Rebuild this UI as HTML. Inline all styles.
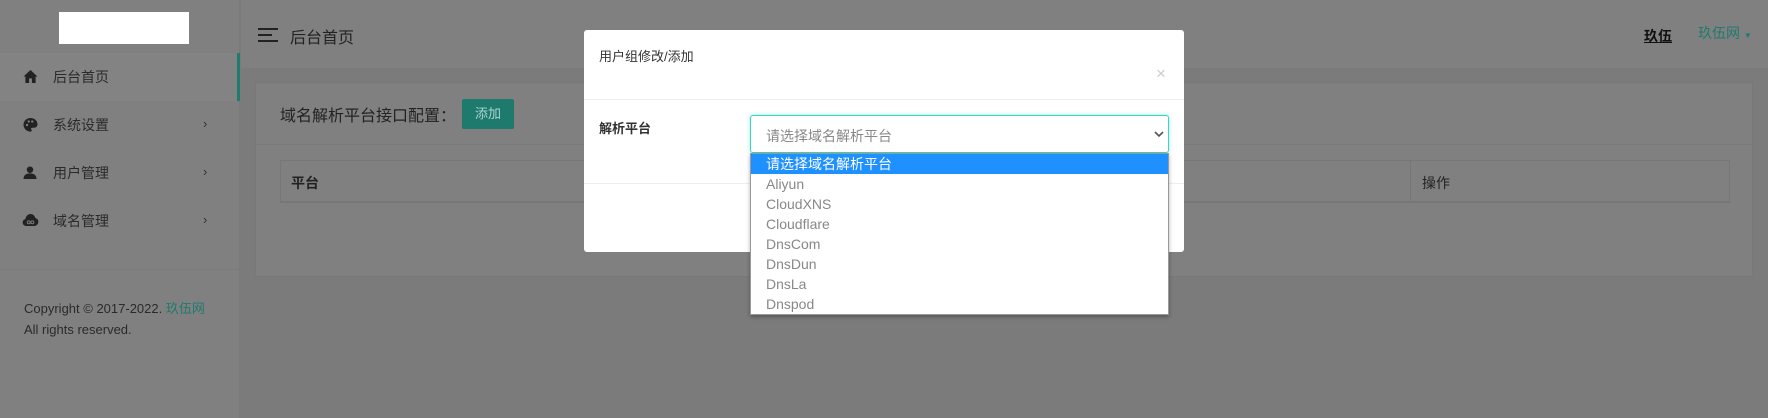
<!DOCTYPE html>
<html><head><meta charset="utf-8"><style>
*{margin:0;padding:0;box-sizing:border-box}
body{width:1768px;height:418px;overflow:hidden;background:#7b7b7b;font-family:"Liberation Sans","Noto Sans CJK SC",sans-serif;position:relative;color:#222}
.a{position:absolute}
.side{left:0;top:0;width:240px;height:418px;background:#808080;border-right:1px solid #7a7a7a}
.menu{left:0;width:240px;height:48px;font-size:14px;color:#2a2a2a}
.menu span{position:absolute;left:53px;top:14px}
.menu i{position:absolute;left:203px;top:15px;font-style:normal;font-size:13px;color:#333}
.menu svg{position:absolute;left:23px;top:17px}
.hdr{left:241px;top:0;width:1527px;height:68px;background:#808080}
.card{left:255px;top:82px;width:1498px;height:195px;background:#808080;border:1px solid #787878}
.opt{left:751px;width:417px;height:20px;font-size:14px;color:#888;padding-left:15px;line-height:20px}
</style></head><body>
<div class="a side">
 <div class="a" style="left:59px;top:12px;width:130px;height:32px;background:#fff"></div>
 <div class="a" style="left:0;top:53px;width:240px;height:1px;background:#7a7a7a"></div>
 <div class="a menu" style="top:53px;background:#838383"><svg width="15" height="13" viewBox="0 0 15 14"><path d="M7.5 0L0 7h2v7h4V9h3v5h4V7h2z" fill="#222"/></svg><span>后台首页</span></div>
 <div class="a" style="left:237px;top:53px;width:3px;height:48px;background:#1f7a6f"></div>
 <div class="a menu" style="top:101px"><svg width="15" height="14" viewBox="0 0 16 16"><path d="M8 0C3.6 0 0 3.4 0 7.6c0 4.3 3.6 8 8 8 1 0 1.4-.6 1.4-1.3 0-.9-.8-1.2-.8-2 0-.8.6-1.2 1.4-1.2H12c2.2 0 4-1.4 4-3.8C16 3 12.4 0 8 0z" fill="#222"/><circle cx="4" cy="8" r="1.3" fill="#808080"/><circle cx="6" cy="4" r="1.3" fill="#808080"/><circle cx="10" cy="4" r="1.3" fill="#808080"/></svg><span>系统设置</span><i>›</i></div>
 <div class="a menu" style="top:149px"><svg width="14" height="13" viewBox="0 0 14 14"><circle cx="7" cy="4" r="3.5" fill="#222"/><path d="M0 14c0-4 3-6 7-6s7 2 7 6z" fill="#222"/></svg><span>用户管理</span><i>›</i></div>
 <div class="a menu" style="top:197px"><svg width="17" height="12" viewBox="0 0 17 13" style="left:22px"><path d="M4 13C1.8 13 0 11.3 0 9.2 0 7.4 1.3 6 3 5.6 3.4 2.5 5.7 0 8.5 0c2.6 0 4.7 1.9 5.2 4.4 1.9.4 3.3 2 3.3 4C17 10.9 15 13 12.6 13z" fill="#222"/><circle cx="6.5" cy="9" r="1.6" fill="none" stroke="#808080" stroke-width="1"/><circle cx="10.5" cy="9" r="1.6" fill="none" stroke="#808080" stroke-width="1"/></svg><span>域名管理</span><i>›</i></div>
 <div class="a" style="left:0;top:269px;width:240px;height:1px;background:#7a7a7a"></div>
 <div class="a" style="left:24px;top:298px;font-size:13px;color:#2a2a2a">Copyright © 2017-2022. <span style="color:#1f7a6f">玖伍网</span></div>
 <div class="a" style="left:24px;top:322px;font-size:13px;color:#2a2a2a">All rights reserved.</div>
</div>
<div class="a hdr">
 <svg class="a" style="left:17px;top:28px" width="20" height="14"><path d="M0 1h20M0 7h14M0 13h20" stroke="#222" stroke-width="2"/></svg>
 <div class="a" style="left:49px;top:24px;font-size:16px;color:#222">后台首页</div>
 <div class="a" style="left:1403px;top:26px;font-size:14px;font-weight:bold;color:#111;text-decoration:underline">玖伍</div>
 <div class="a" style="left:1457px;top:23px;font-size:14px;color:#1f7a6f">玖伍网 <span style="font-size:8px">▼</span></div>
</div>
<div class="a card">
 <div class="a" style="left:24px;top:19px;font-size:16px;color:#222">域名解析平台接口配置：</div>
 <div class="a" style="left:206px;top:16px;width:52px;height:30px;background:#1d7a6c;font-size:13px;line-height:30px;text-align:center;border-radius:2px;color:#a9d6cf">添加</div>
 <div class="a" style="left:0;top:61px;width:1496px;height:1px;background:#7a7a7a"></div>
 <div class="a" style="left:24px;top:77px;width:1450px;height:43px;border:1px solid #777;border-bottom:2px solid #777"></div>
 <div class="a" style="left:1154px;top:77px;width:1px;height:41px;background:#777"></div>
 <div class="a" style="left:35px;top:90px;font-size:14px;font-weight:bold;color:#222">平台</div>
 <div class="a" style="left:1166px;top:90px;font-size:14px;color:#222">操作</div>
</div>
<div class="a" style="left:584px;top:30px;width:600px;height:222px;background:#fff;border-radius:3px">
 <div class="a" style="left:15px;top:16px;font-size:13px;color:#333">用户组修改/添加</div>
 <div class="a" style="left:572px;top:34px;font-size:17px;color:#ccc">×</div>
 <div class="a" style="left:0;top:69px;width:600px;height:1px;background:#eee"></div>
 <div class="a" style="left:15px;top:88px;font-size:13px;font-weight:bold;color:#333">解析平台</div>
 <div class="a" style="left:0;top:153px;width:600px;height:1px;background:#eee"></div>
</div>
<div class="a" style="left:750px;top:115px;width:419px;height:38px;border:1px solid #3ad6c0;border-radius:3px;background:#fff;box-shadow:0 0 4px rgba(58,214,192,.5)">
 <div class="a" style="left:15px;top:10px;font-size:14px;color:#888">请选择域名解析平台</div>
 <svg class="a" style="left:403px;top:15px" width="10" height="7"><path d="M1 1l4 4 4-4" stroke="#555" stroke-width="1.6" fill="none"/></svg>
</div>
<div class="a" style="left:750px;top:153px;width:419px;height:162px;background:#fff;border:1px solid #999;box-shadow:0 2px 4px rgba(0,0,0,.3)"></div>
<div class="a" style="left:751px;top:154px;width:417px;height:20px;background:#1e90ff"></div>
<div class="a opt" style="top:154px;color:#fff">请选择域名解析平台</div>
<div class="a opt" style="top:174px">Aliyun</div>
<div class="a opt" style="top:194px">CloudXNS</div>
<div class="a opt" style="top:214px">Cloudflare</div>
<div class="a opt" style="top:234px">DnsCom</div>
<div class="a opt" style="top:254px">DnsDun</div>
<div class="a opt" style="top:274px">DnsLa</div>
<div class="a opt" style="top:294px">Dnspod</div>
</body></html>
